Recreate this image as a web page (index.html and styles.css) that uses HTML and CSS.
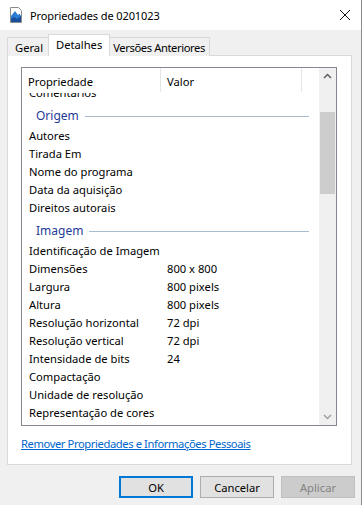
FILE: index.html
```html
<!DOCTYPE html>
<html lang="pt">
<head>
    <meta charset="UTF-8">
    <title>Propriedades de 0201023</title>
    <link rel="stylesheet" href="styles.css">
</head>
<body>
    <div class="window">
        <div class="titlebar">
            <svg class="app-icon" width="16" height="16" viewBox="0 0 16 16">
                <path d="M2.5 0.5h8l3 3v12h-11z" fill="#fff" stroke="#8a8a8a"/>
                <path d="M3 9l4-5 3 4 1.5-1.5L13 9v6H3z" fill="#2b7cd3"/>
                <path d="M3 12l3-2 3 2 4-3v6H3z" fill="#1a4f9c"/>
            </svg>
            <span class="title">Propriedades de 0201023</span>
            <svg class="close" width="12" height="12" viewBox="0 0 12 12">
                <path d="M1 1l10 10M11 1L1 11" stroke="#111" stroke-width="1"/>
            </svg>
        </div>

        <div class="content">
            <div class="tabs">
                <div class="tab">Geral</div>
                <div class="tab active">Detalhes</div>
                <div class="tab tight">Versões Anteriores</div>
            </div>

            <div class="panel">
                <div class="listbox">
                    <div class="list">
                        <div class="list-header">
                            <div class="col-prop">Propriedade</div>
                            <div class="col-val">Valor</div>
                            <div class="col-rest"></div>
                        </div>
                        <div class="rows">
                            <div class="row cut"><span class="prop">Comentarios</span></div>
                            <div class="group"><span>Origem</span></div>
                            <div class="row"><span class="prop">Autores</span></div>
                            <div class="row"><span class="prop">Tirada Em</span></div>
                            <div class="row"><span class="prop">Nome do programa</span></div>
                            <div class="row"><span class="prop">Data da aquisição</span></div>
                            <div class="row"><span class="prop">Direitos autorais</span></div>
                            <div class="group"><span>Imagem</span></div>
                            <div class="row"><span class="prop">Identificação de Imagem</span></div>
                            <div class="row"><span class="prop">Dimensões</span><span class="val">800 x 800</span></div>
                            <div class="row"><span class="prop">Largura</span><span class="val">800 pixels</span></div>
                            <div class="row"><span class="prop">Altura</span><span class="val">800 pixels</span></div>
                            <div class="row"><span class="prop">Resolução horizontal</span><span class="val">72 dpi</span></div>
                            <div class="row"><span class="prop">Resolução vertical</span><span class="val">72 dpi</span></div>
                            <div class="row"><span class="prop">Intensidade de bits</span><span class="val">24</span></div>
                            <div class="row"><span class="prop">Compactação</span></div>
                            <div class="row"><span class="prop">Unidade de resolução</span></div>
                            <div class="row"><span class="prop">Representação de cores</span></div>
                        </div>
                    </div>
                    <div class="scrollbar">
                        <svg class="arrow" width="17" height="17" viewBox="0 0 17 17">
                            <path d="M5 10l3.5-3.5L12 10" fill="none" stroke="#606060" stroke-width="1.5"/>
                        </svg>
                        <div class="track">
                            <div class="thumb"></div>
                        </div>
                        <svg class="arrow" width="17" height="17" viewBox="0 0 17 17">
                            <path d="M5 7l3.5 3.5L12 7" fill="none" stroke="#a0a0a0" stroke-width="1.5"/>
                        </svg>
                    </div>
                </div>
                <a href="#" class="link">Remover Propriedades e Informações Pessoais</a>
            </div>

            <div class="buttons">
                <button class="btn default">OK</button>
                <button class="btn">Cancelar</button>
                <button class="btn" disabled>Aplicar</button>
            </div>
        </div>
    </div>
</body>
</html>
```

FILE: styles.css
```css
html, body {
    margin: 0;
    padding: 0;
}
body {
    font-family: "Noto Sans", "Open Sans", sans-serif;
    font-size: 11.2px;
    color: #000;
    background: #f0f0f0;
}
.window {
    width: 362px;
    height: 505px;
    box-sizing: border-box;
    border-right: 1px solid #8c8c8c;
    background: #f0f0f0;
    display: flex;
    flex-direction: column;
}
.titlebar {
    height: 30px;
    background: #fff;
    display: flex;
    align-items: center;
    padding: 0 10px 0 8px;
}
.app-icon {
    margin-right: 6px;
}
.title {
    flex: 1;
    font-size: 11px;
    letter-spacing: -0.1px;
}
.content {
    flex: 1;
    padding: 6px 9px 0 7px;
    display: flex;
    flex-direction: column;
}
.tabs {
    display: flex;
    align-items: flex-end;
    height: 20px;
    position: relative;
    z-index: 1;
}
.tab {
    height: 18px;
    line-height: 19px;
    padding: 0 6px 0 7px;
    border: 1px solid #d9d9d9;
    border-bottom: none;
    margin-right: -1px;
    background: #f0f0f0;
    white-space: nowrap;
}
.tab.tight {
    padding: 0 4px;
    letter-spacing: -0.4px;
}
.tab.active {
    height: 21px;
    line-height: 19px;
    background: #fff;
    margin-left: -1px;
    margin-right: -2px;
    padding: 0 7px;
    position: relative;
    z-index: 2;
}
.panel {
    height: 410px;
    box-sizing: border-box;
    background: #fff;
    border: 1px solid #d9d9d9;
    margin-top: -1px;
    padding: 11px 14px 0 13px;
}
.listbox {
    height: 359px;
    box-sizing: border-box;
    border: 1px solid #828790;
    display: flex;
}
.list {
    flex: 1;
    display: flex;
    flex-direction: column;
    overflow: hidden;
}
.list-header {
    height: 25px;
    display: flex;
    flex-shrink: 0;
    background: #fff;
    position: relative;
    z-index: 1;
}
.list-header > div {
    line-height: 25px;
    padding-top: 1px;
    border-right: 1px solid #e5e5e5;
    height: 23px;
}
.col-prop {
    width: 132px;
    padding-left: 6px;
}
.col-val {
    width: 134px;
    padding-left: 6px;
}
.col-rest {
    flex: 1;
    border-right: none !important;
}
.rows {
    flex: 1;
}
.row {
    height: 18px;
    line-height: 18px;
    display: flex;
    padding-left: 7px;
    white-space: nowrap;
}
.row.cut {
    margin-top: -9px;
}
.prop {
    width: 138px;
}
.val {
    flex: 1;
}
.group {
    height: 25px;
    display: flex;
    align-items: flex-start;
    padding-left: 14px;
    padding-right: 10px;
    color: #1e3c96;
    font-size: 12px;
}
.group span {
    line-height: 18px;
    margin-top: 5px;
}
.group::after {
    content: "";
    flex: 1;
    height: 1px;
    background: #a8bccf;
    margin-top: 14px;
    margin-left: 6px;
}
.scrollbar {
    width: 17px;
    background: #f0f0f0;
    display: flex;
    flex-direction: column;
}
.arrow {
    flex-shrink: 0;
}
.track {
    flex: 1;
    padding-top: 27px;
}
.thumb {
    height: 82px;
    margin: 0 1px;
    background: #cdcdcd;
}
.link {
    display: inline-block;
    margin-top: 10px;
    color: #0066cc;
    text-decoration: underline;
    letter-spacing: -0.4px;
}
.buttons {
    display: flex;
    justify-content: flex-end;
    gap: 7px;
    padding: 11px 0 0;
    margin-right: -3px;
}
.btn {
    width: 74px;
    height: 22px;
    box-sizing: border-box;
    font-family: inherit;
    font-size: 11.2px;
    background: #e1e1e1;
    border: 1px solid #adadad;
    color: #000;
    padding: 0;
}
.btn.default {
    border: 2px solid #0078d7;
}
.btn:disabled {
    background: #cccccc;
    border-color: #bfbfbf;
    color: #838383;
}
```
